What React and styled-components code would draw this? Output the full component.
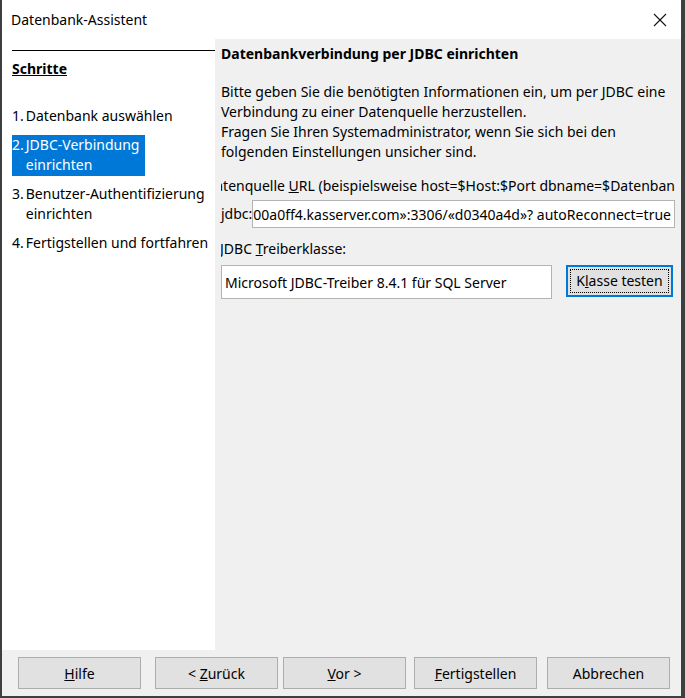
import React from "react";
import styled, { createGlobalStyle } from "styled-components";

const Global = createGlobalStyle`
  html, body { margin: 0; padding: 0; background: #3f3f3f; }
  body { font-family: "Noto Sans", "Open Sans", sans-serif; color: #000; }
  *, *::before, *::after { box-sizing: border-box; }
`;

const Window = styled.div`
  width: 679px;
  height: 696px;
  margin-left: 2px;
  display: flex;
  flex-direction: column;
  background: #f0f0f0;
  overflow: hidden;
`;

const TitleBar = styled.div`
  height: 39px;
  flex-shrink: 0;
  background: #fff;
  display: flex;
  align-items: center;
  justify-content: space-between;
  padding: 0 14px 0 9px;
  font-size: 14px;
`;

const CloseIcon = () => (
  <svg width="14" height="14" viewBox="0 0 14 14">
    <path d="M1 1 L13 13 M13 1 L1 13" stroke="#111" strokeWidth="1.1" fill="none" />
  </svg>
);

const Main = styled.div`
  flex: 1;
  display: flex;
  min-height: 0;
`;

const StepsPanel = styled.div`
  width: 213px;
  flex-shrink: 0;
  background: #fff;
  padding: 11px 0 0 10px;
  display: flex;
  flex-direction: column;
  font-size: 14px;
`;

const StepsHeader = styled.div`
  border-top: 1px solid #000;
  padding-top: 8px;
  font-weight: bold;
  text-decoration: underline;
  line-height: 20px;
  margin-bottom: 27px;
`;

const StepList = styled.div`
  display: flex;
  flex-direction: column;
  align-items: flex-start;
  gap: 8px;
`;

const Step = styled.div`
  display: grid;
  grid-template-columns: auto auto;
  column-gap: 2px;
  line-height: 20px;
  padding: 0 6px 1px 0;
  background: ${(p) => (p.$active ? "#0078d7" : "transparent")};
  color: ${(p) => (p.$active ? "#fff" : "#000")};
`;

const StepNum = styled.span``;
const StepText = styled.span``;

const Content = styled.div`
  flex: 1;
  padding: 5px 6px 0 6px;
  font-size: 14px;
  min-width: 0;
`;

const Heading = styled.div`
  font-weight: bold;
  line-height: 20px;
  margin-bottom: 18px;
`;

const Paragraph = styled.div`
  line-height: 20px;
  margin-bottom: 14px;
  white-space: nowrap;
`;

const ClippedLabel = styled.div`
  line-height: 20px;
  white-space: nowrap;
  overflow: hidden;
  text-indent: ${(p) => p.$indent || 0}px;
  margin-bottom: ${(p) => p.$mb || 0}px;
`;

const U = styled.span`
  text-decoration: underline;
`;

const UrlRow = styled.div`
  display: flex;
  align-items: center;
  margin-bottom: 11px;
`;

const Prefix = styled.span`
  white-space: nowrap;
  line-height: 20px;
`;

const TextBox = styled.div`
  height: ${(p) => p.$h}px;
  background: #fff;
  border: 1px solid #b4b4b4;
  display: flex;
  align-items: center;
  justify-content: ${(p) => (p.$end ? "flex-end" : "flex-start")};
  padding: 0 3px;
  overflow: hidden;
  white-space: nowrap;
  flex: ${(p) => (p.$grow ? 1 : "none")};
  width: ${(p) => (p.$w ? `${p.$w}px` : "auto")};
`;

const TextValue = styled.span`
  flex-shrink: 0;
`;

const DriverRow = styled.div`
  display: flex;
  align-items: flex-start;
  gap: 14px;
  margin-top: 6px;
`;

const TestButton = styled.button`
  width: 107px;
  height: 32px;
  background: #e1e1e1;
  border: 2px solid #0078d7;
  padding: 2px;
  font: inherit;
  font-size: 14px;
  color: #000;
  display: flex;
  align-items: stretch;
`;

const FocusRing = styled.span`
  flex: 1;
  border: 1px dotted #000;
  display: flex;
  align-items: center;
  justify-content: center;
  line-height: 1;
`;

const Footer = styled.div`
  height: 46px;
  flex-shrink: 0;
  display: flex;
  align-items: flex-start;
  padding: 7px 0 0 16px;
`;

const FooterButton = styled.button`
  width: 123px;
  height: 32px;
  margin-left: ${(p) => p.$gap || 0}px;
  background: #e1e1e1;
  border: 1px solid #adadad;
  font: inherit;
  font-size: 14px;
  color: #000;
  padding: 0;
`;

export default function App() {
  return (
    <>
      <Global />
      <Window>
        <TitleBar>
          <span>Datenbank-Assistent</span>
          <CloseIcon />
        </TitleBar>
        <Main>
          <StepsPanel>
            <StepsHeader>Schritte</StepsHeader>
            <StepList>
              <Step>
                <StepNum>1.</StepNum>
                <StepText>Datenbank auswählen</StepText>
              </Step>
              <Step $active>
                <StepNum>2.</StepNum>
                <StepText>
                  JDBC-Verbindung
                  <br />
                  einrichten
                </StepText>
              </Step>
              <Step>
                <StepNum>3.</StepNum>
                <StepText>
                  Benutzer-Authentifizierung
                  <br />
                  einrichten
                </StepText>
              </Step>
              <Step>
                <StepNum>4.</StepNum>
                <StepText>Fertigstellen und fortfahren</StepText>
              </Step>
            </StepList>
          </StepsPanel>
          <Content>
            <Heading>Datenbankverbindung per JDBC einrichten</Heading>
            <Paragraph>
              Bitte geben Sie die benötigten Informationen ein, um per JDBC eine
              <br />
              Verbindung zu einer Datenquelle herzustellen.
              <br />
              Fragen Sie Ihren Systemadministrator, wenn Sie sich bei den
              <br />
              folgenden Einstellungen unsicher sind.
            </Paragraph>
            <ClippedLabel $indent={-16} $mb={4}>
              Datenquelle <U>U</U>RL (beispielsweise host=$Host:$Port dbname=$Datenbank)
            </ClippedLabel>
            <UrlRow>
              <Prefix>jdbc:</Prefix>
              <TextBox $h={28} $grow $end>
                <TextValue>mysql://«w00a0ff4.kasserver.com»:3306/«d0340a4d»? autoReconnect=true</TextValue>
              </TextBox>
            </UrlRow>
            <ClippedLabel $indent={-1}>
              JDBC <U>T</U>reiberklasse:
            </ClippedLabel>
            <DriverRow>
              <TextBox $h={34} $w={331}>
                <TextValue>Microsoft JDBC-Treiber 8.4.1 für SQL Server</TextValue>
              </TextBox>
              <TestButton>
                <FocusRing>
                  K<U>l</U>asse testen
                </FocusRing>
              </TestButton>
            </DriverRow>
          </Content>
        </Main>
        <Footer>
          <FooterButton>
            <U>H</U>ilfe
          </FooterButton>
          <FooterButton $gap={14}>
            &lt; <U>Z</U>urück
          </FooterButton>
          <FooterButton $gap={5}>
            <U>V</U>or &gt;
          </FooterButton>
          <FooterButton $gap={8}>
            <U>F</U>ertigstellen
          </FooterButton>
          <FooterButton $gap={10}>Abbrechen</FooterButton>
        </Footer>
      </Window>
    </>
  );
}
